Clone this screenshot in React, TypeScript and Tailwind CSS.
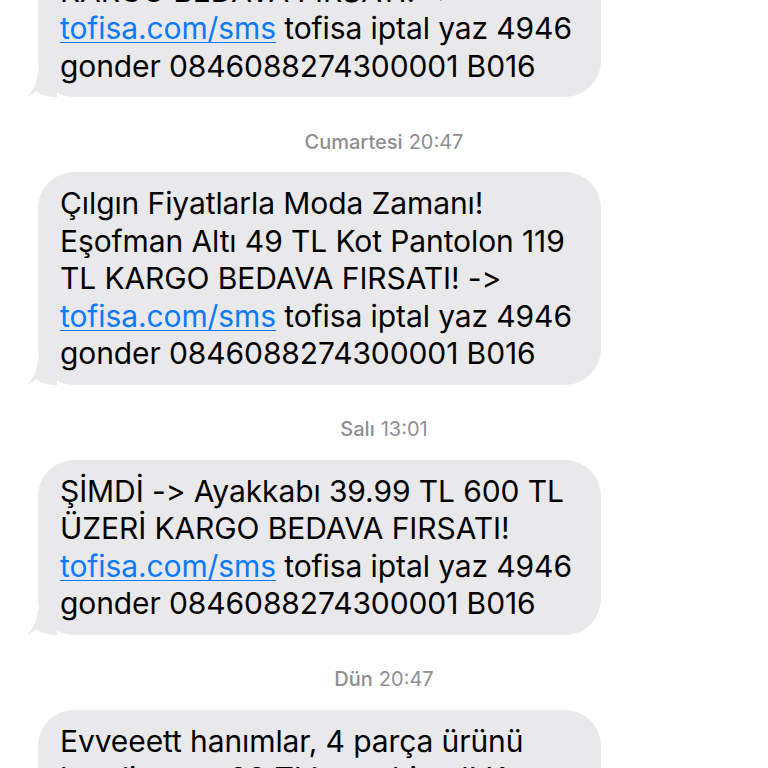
import React from 'react';

type Part = { text: string; link?: boolean };

interface Msg {
  stamp?: string;
  lines: Part[][];
}

const messages: Msg[] = [
  {
    lines: [
      [{ text: 'Çılgın Fiyatlarla Moda Zamanı!' }],
      [{ text: 'Eşofman Altı 49 TL Kot Pantolon 119' }],
      [{ text: 'TL İndirimler Başladı! Üstelik' }],
      [{ text: 'KARGO BEDAVA FIRSATI! ->' }],
      [{ text: 'tofisa.com/sms', link: true }, { text: ' tofisa iptal yaz 4946' }],
      [{ text: 'gonder 0846088274300001 B016' }],
    ],
  },
  {
    stamp: 'Cumartesi',
    lines: [
      [{ text: 'Çılgın Fiyatlarla Moda Zamanı!' }],
      [{ text: 'Eşofman Altı 49 TL Kot Pantolon 119' }],
      [{ text: 'TL KARGO BEDAVA FIRSATI! ->' }],
      [{ text: 'tofisa.com/sms', link: true }, { text: ' tofisa iptal yaz 4946' }],
      [{ text: 'gonder 0846088274300001 B016' }],
    ],
  },
  {
    stamp: 'Salı',
    lines: [
      [{ text: 'ŞİMDİ -> Ayakkabı 39.99 TL 600 TL' }],
      [{ text: 'ÜZERİ KARGO BEDAVA FIRSATI!' }],
      [{ text: 'tofisa.com/sms', link: true }, { text: ' tofisa iptal yaz 4946' }],
      [{ text: 'gonder 0846088274300001 B016' }],
    ],
  },
  {
    stamp: 'Dün',
    lines: [
      [{ text: 'Evveeett hanımlar, 4 parça ürünü' }],
      [{ text: 'kendin seç, 99 TL’ye sahip ol! Kaçırma,' }],
      [{ text: 'stoklarla sınırlı!' }],
    ],
  },
];

const times = ['', '20:47', '13:01', '20:47'];

function Tail() {
  return (
    <svg className="absolute left-[-11px] bottom-0" width="30" height="26" viewBox="0 0 30 26">
      <path d="M11 0 L30 0 L30 26 C22 26 14 24 9 20 C6 23 3 24.5 0 25 C6 20 10 13 11 0 Z" fill="#e9e9eb" />
    </svg>
  );
}

function Bubble({ lines }: { lines: Part[][] }) {
  return (
    <div className="relative ml-[38px] w-[563px] rounded-[36px] bg-[#e9e9eb] pl-[22px] pr-4 pt-[13px] pb-[12px]">
      <Tail />
      <div className="relative text-[30px] leading-[37.5px] tracking-[-0.1px] text-black [font-feature-settings:'calt'_0,'liga'_0]">
        {lines.map((line, i) => (
          <div key={i} className="whitespace-nowrap">
            {line.map((p, j) =>
              p.link ? (
                <span key={j} className="text-[#0a7aff] underline decoration-1 underline-offset-[3px]">{p.text}</span>
              ) : (
                <span key={j}>{p.text}</span>
              )
            )}
          </div>
        ))}
      </div>
    </div>
  );
}

export default function App() {
  return (
    <div className="h-[768px] w-[768px] overflow-hidden bg-white" style={{ fontFamily: 'Inter, Roboto, sans-serif' }}>
      <div className="-mt-[153px] flex flex-col">
        {messages.map((m, i) => (
          <div key={i} className="flex flex-col">
            {m.stamp && (
              <div className="flex h-[75px] items-center justify-center pt-[14px] text-[20px] text-[#8e8e93]">
                <span className="font-medium">{m.stamp}</span>
                <span className="ml-[6px]">{times[i]}</span>
              </div>
            )}
            <Bubble lines={m.lines} />
          </div>
        ))}
      </div>
    </div>
  );
}
